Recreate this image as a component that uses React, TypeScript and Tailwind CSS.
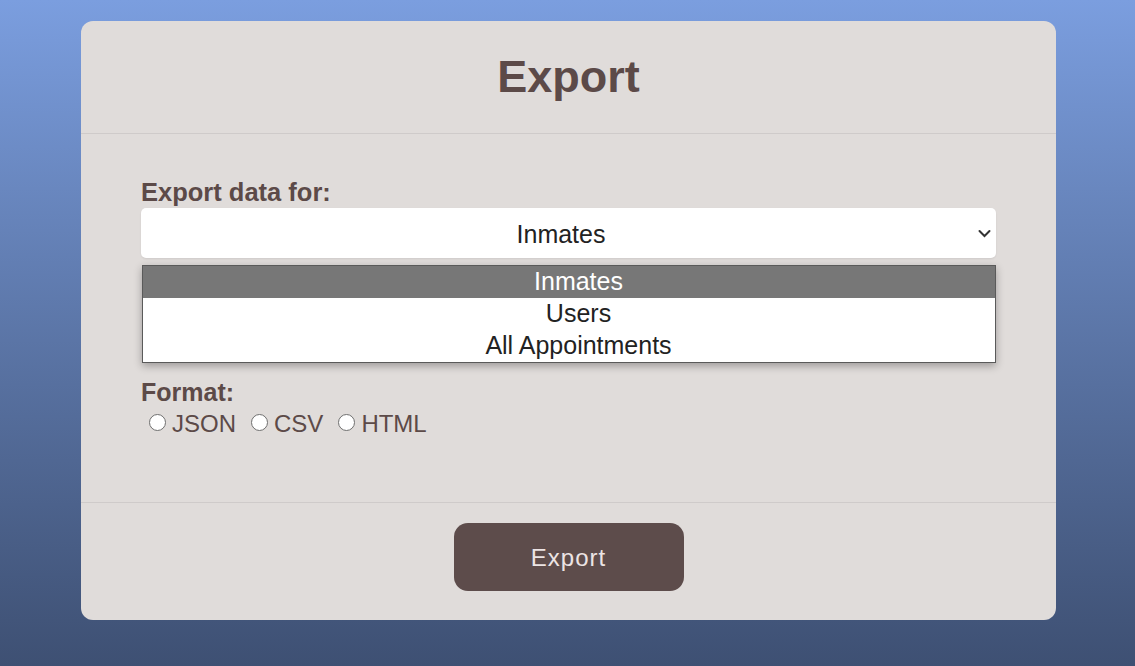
import React from "react";

const options = ["Inmates", "Users", "All Appointments"];
const formats = ["JSON", "CSV", "HTML"];

export default function App() {
  return (
    <div
      className="min-h-screen w-full bg-linear-to-b from-[#7b9edf] to-[#3e5073] pt-[21px]"
      style={{ fontFamily: '"Liberation Sans", Arial, sans-serif' }}
    >
      <div className="ml-[81px] w-[975px] rounded-[12px] bg-[#e0dcda] text-[#5c4a48]">
        {/* header */}
        <div className="flex h-[113px] items-center justify-center border-b border-[#cfcbca]">
          <h1 className="text-[45px] font-bold leading-none -mt-[1px]">Export</h1>
        </div>

        {/* body */}
        <div className="px-[60px] pt-[44px] h-[369px] border-b border-[#cfcbca]">
          <div className="relative">
            <label className="block text-[25.5px] font-bold leading-[29px]">
              Export data for:
            </label>
            <div className="relative mt-[1px] flex h-[50px] items-center rounded-[5px] bg-white shadow-[0_1px_2px_rgba(0,0,0,0.08)]">
              <span className="flex-1 pr-[15px] pt-[4px] text-center text-[25px] text-[#222]">
                Inmates
              </span>
              <svg
                className="absolute right-[5px] top-[21px]"
                width="13"
                height="9"
                viewBox="0 0 13 9"
                fill="none"
              >
                <path
                  d="M1.5 2 L6.5 7 L11.5 2"
                  stroke="#333"
                  strokeWidth="2"
                  strokeLinecap="round"
                />
              </svg>
            </div>

            {/* open dropdown list */}
            <ul className="absolute left-[1px] right-0 top-[87px] z-10 border border-[#5a5a5a] bg-white shadow-[0_3px_8px_rgba(0,0,0,0.3)]">
              {options.map((o, i) => (
                <li
                  key={o}
                  className={
                    i === 0
                      ? "h-[32px] bg-[#777777] pl-[19px] pb-[2px] text-center text-[25px] leading-[30px] text-white"
                      : "h-[32px] pl-[19px] pb-[2px] text-center text-[25px] leading-[30px] text-[#222]"
                  }
                >
                  {o}
                </li>
              ))}
            </ul>

            <div className="h-[120px]" />

            <label className="block text-[25px] font-bold leading-[29px]">
              Format:
            </label>
            <div className="flex items-center gap-[15px] pl-[8px] mt-[3px]">
              {formats.map((f) => (
                <label key={f} className="flex items-center gap-[6px]">
                  <input
                    type="radio"
                    name="format"
                    className="h-[17px] w-[17px] appearance-none rounded-full border border-[#6f6f6f] bg-white -mt-[3px]"
                  />
                  <span className="text-[24px] leading-[28px]">{f}</span>
                </label>
              ))}
            </div>
          </div>
        </div>

        {/* footer */}
        <div className="flex justify-center pt-[20px] pb-[29px]">
          <button
            type="button"
            className="h-[68px] w-[230px] rounded-[14px] bg-[#5d4c4b] pt-[2px] text-[24px] tracking-[1px] text-[#ece4e4]"
          >
            Export
          </button>
        </div>
      </div>
    </div>
  );
}
